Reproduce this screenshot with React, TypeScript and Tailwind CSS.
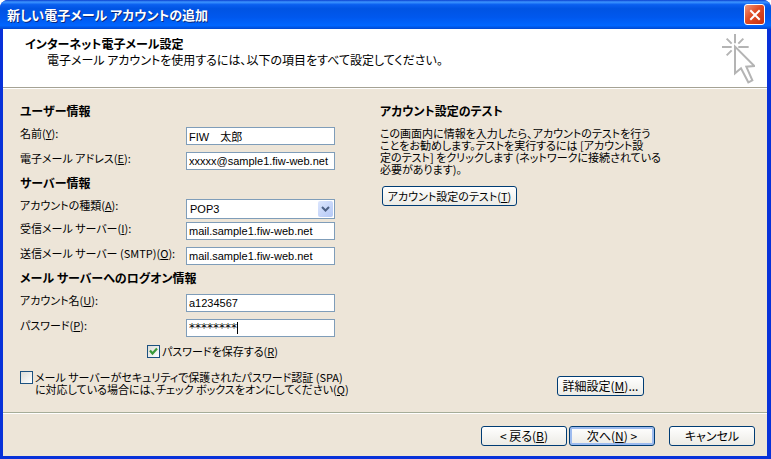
import { useState } from 'react'
import type { ReactNode } from 'react'

type FieldProps = {
  id: string
  label: string
  hotkey: string
  children: ReactNode
}

const INPUT = 'block h-[18px] w-full border border-[#7f9db9] bg-white px-0.5 leading-4 text-black outline-none'
const LATIN = "text-[11px] font-['Liberation_Sans','Noto_Sans_CJK_JP',sans-serif]"
const STARS = "text-xs font-['DejaVu_Sans',sans-serif]"

export default function App() {
  const [form, setForm] = useState({
    name: 'FIW　太郎',
    email: 'xxxxx@sample1.fiw-web.net',
    type: 'POP3',
    incoming: 'mail.sample1.fiw-web.net',
    outgoing: 'mail.sample1.fiw-web.net',
    account: 'a1234567',
    password: '********',
  })
  const [savePassword, setSavePassword] = useState(true)
  const [useSpa, setUseSpa] = useState(false)

  const bind = (key: keyof typeof form) => ({
    id: key,
    value: form[key],
    onChange: (e: { target: { value: string } }) => setForm(prev => ({ ...prev, [key]: e.target.value })),
  })

  return (
    <div className="flex min-h-screen flex-col rounded-t-lg bg-[#0831d9] font-['Noto_Sans_CJK_JP',sans-serif] text-xs text-black [font-feature-settings:'palt']">
      {/* Title bar */}
      <header className="flex h-[29px] items-center justify-between rounded-t-lg bg-[linear-gradient(#0a3fd0_0%,#3d95ff_7%,#0a5ff0_16%,#0054e3_30%,#0058ee_60%,#0066ff_88%,#0048d0_100%)] pr-1.5 pl-[7px]">
        <h1 className="text-[13px] leading-5 font-bold text-white [text-shadow:1px_1px_#0a2a80]">
          新しい電子メール アカウントの追加
        </h1>
        <button
          type="button"
          aria-label="閉じる"
          className="flex size-[21px] items-center justify-center rounded-[3px] border border-white bg-[linear-gradient(135deg,#f0977c,#df4c25_45%,#c5300f)]"
        >
          <svg viewBox="0 0 12 12" className="size-3" stroke="white" strokeWidth="2" strokeLinecap="square">
            <path d="M2 2l8 8M10 2l-8 8" />
          </svg>
        </button>
      </header>

      <div className="mr-1 mb-[3px] ml-[3px] flex grow flex-col bg-[#ede5d8]">
        {/* Banner */}
        <div className="flex h-[59px] items-start justify-between border-b border-[#a5a294] bg-white pr-3 pl-[22px]">
          <div className="pt-[7px]">
            <h2 className="leading-4 font-bold">インターネット電子メール設定</h2>
            <p className="pl-[22px] leading-4">
              電子メール アカウントを使用するには、以下の項目をすべて設定してください。
            </p>
          </div>
          <WizardIcon />
        </div>

        <div className="flex grow gap-[45px] border-t border-white px-[17px] pt-3.5 pb-4">
          {/* Account fields */}
          <div className="w-[315px] shrink-0">
            <Heading>ユーザー情報</Heading>
            <div className="mt-2 mb-[5px] space-y-[7px]">
              <Field id="name" label="名前" hotkey="Y">
                <input type="text" className={`${INPUT} ${LATIN}`} {...bind('name')} />
              </Field>
              <Field id="email" label="電子メール アドレス" hotkey="E">
                <input type="text" className={`${INPUT} ${LATIN}`} {...bind('email')} />
              </Field>
            </div>

            <Heading>サーバー情報</Heading>
            <div className="mt-2 mb-[3px]">
              <Field id="type" label="アカウントの種類" hotkey="A">
                <select
                  className={`block h-5 w-full appearance-none border border-[#7f9db9] bg-white px-[3px] leading-4 outline-none ${LATIN}`}
                  {...bind('type')}
                >
                  <option>POP3</option>
                  <option>IMAP</option>
                </select>
                <span className="pointer-events-none absolute top-0.5 right-0.5 flex h-4 w-[15px] items-center justify-center rounded-xs bg-[linear-gradient(135deg,#dce6fd,#b4c8f6)]">
                  <svg viewBox="0 0 9 6" className="h-1.5 w-[9px]" fill="none" stroke="#4d6185" strokeWidth="2">
                    <path d="M1 1l3.5 3.5L8 1" />
                  </svg>
                </span>
              </Field>
            </div>
            <div className="mb-[5px] space-y-[7px]">
              <Field id="incoming" label="受信メール サーバー" hotkey="I">
                <input type="text" className={`${INPUT} ${LATIN}`} {...bind('incoming')} />
              </Field>
              <Field id="outgoing" label="送信メール サーバー (SMTP)" hotkey="O">
                <input type="text" className={`${INPUT} ${LATIN}`} {...bind('outgoing')} />
              </Field>
            </div>

            <Heading>メール サーバーへのログオン情報</Heading>
            <div className="mt-2 space-y-[7px]">
              <Field id="account" label="アカウント名" hotkey="U">
                <input type="text" className={`${INPUT} ${LATIN}`} {...bind('account')} />
              </Field>
              <Field id="password" label="パスワード" hotkey="P">
                <input type="text" className={`${INPUT} ${STARS}`} {...bind('password')} />
                <span className="absolute top-[3px] left-[51px] h-3 w-px bg-black" />
              </Field>
            </div>

            <div className="mt-2 ml-[127px] flex items-start gap-0.5">
              <CheckBox id="save" checked={savePassword} onChange={setSavePassword} />
              <label htmlFor="save" className="text-[11px] leading-3">
                パスワードを保存する(<u>R</u>)
              </label>
            </div>
            <div className="mt-[13px] flex items-start gap-0.5">
              <CheckBox id="spa" checked={useSpa} onChange={setUseSpa} />
              <label htmlFor="spa" className="text-[11px] leading-3 whitespace-nowrap">
                メール サーバーがセキュリティで保護されたパスワード認証 (SPA)
                <br />
                に対応している場合には、チェック ボックスをオンにしてください(<u>Q</u>)
              </label>
            </div>
          </div>

          {/* Test settings */}
          <div className="flex w-[264px] flex-col items-start">
            <Heading>アカウント設定のテスト</Heading>
            <p className="mt-2 text-[11px] leading-3 whitespace-nowrap">
              この画面内に情報を入力したら、アカウントのテストを行う
              <br />
              ことをお勧めします。テストを実行するには [アカウント設
              <br />
              定のテスト] をクリックします (ネットワークに接続されている
              <br />
              必要があります)。
            </p>
            <PushButton className="mt-[11px] ml-0.5 w-[135px] text-[11px]">
              アカウント設定のテスト(<u>T</u>)
            </PushButton>
            <PushButton className="mt-auto w-[87px] self-end">
              詳細設定(<u>M</u>)...
            </PushButton>
          </div>
        </div>

        {/* Wizard navigation */}
        <footer className="border-t border-[#a5ac98]">
          <div className="flex justify-end border-t border-white pt-3 pr-3 pb-2.5">
            <PushButton className="w-[86px]">
              &lt; 戻る(<u>B</u>)
            </PushButton>
            <PushButton className="ml-0.5 w-[86px] shadow-[inset_0_0_0_2px_#9dbbef]">
              次へ(<u>N</u>) &gt;
            </PushButton>
            <PushButton className="ml-3.5 w-[86px]">キャンセル</PushButton>
          </div>
        </footer>
      </div>
    </div>
  )
}

function Heading({ children }: { children: ReactNode }) {
  return <h3 className="leading-4 font-bold">{children}</h3>
}

function Field({ id, label, hotkey, children }: FieldProps) {
  return (
    <div className="flex items-start">
      <label htmlFor={id} className="w-[166px] shrink-0 text-[11px] leading-3 whitespace-nowrap">
        {label}(<u>{hotkey}</u>):
      </label>
      <div className="relative grow">{children}</div>
    </div>
  )
}

function CheckBox({
  id,
  checked,
  onChange,
}: {
  id: string
  checked: boolean
  onChange: (checked: boolean) => void
}) {
  return (
    <span className="relative size-[13px] shrink-0">
      <input
        id={id}
        type="checkbox"
        checked={checked}
        onChange={e => onChange(e.target.checked)}
        className="block size-[13px] appearance-none border border-[#1c5180] bg-[linear-gradient(135deg,#dcdcd7,#ffffff)]"
      />
      {checked && (
        <svg
          viewBox="0 0 13 13"
          className="pointer-events-none absolute inset-0 size-[13px]"
          fill="none"
          stroke="#3a9a3a"
          strokeWidth="2.2"
        >
          <path d="M3 5.5l2.5 3L10 3.5" />
        </svg>
      )}
    </span>
  )
}

function PushButton({ className, children }: { className: string; children: ReactNode }) {
  return (
    <button
      type="button"
      className={`h-5 rounded-[3px] border border-[#003c74] bg-linear-to-b from-white to-[#ecebe5] text-center leading-4 whitespace-nowrap ${className}`}
    >
      {children}
    </button>
  )
}

function WizardIcon() {
  return (
    <svg viewBox="240 99 102 153" className="mt-1 h-[51px] w-[34px]" fill="none" stroke="#b4b4b4" strokeWidth="6">
      <path d="M282 102v28M243 141h29M292 141h31M257 116l15 15M307 116l-15 15M257 166l15-15" />
      <path d="M282 140v80l18-15 22 42 12-6-18-41 24-2z" />
    </svg>
  )
}
